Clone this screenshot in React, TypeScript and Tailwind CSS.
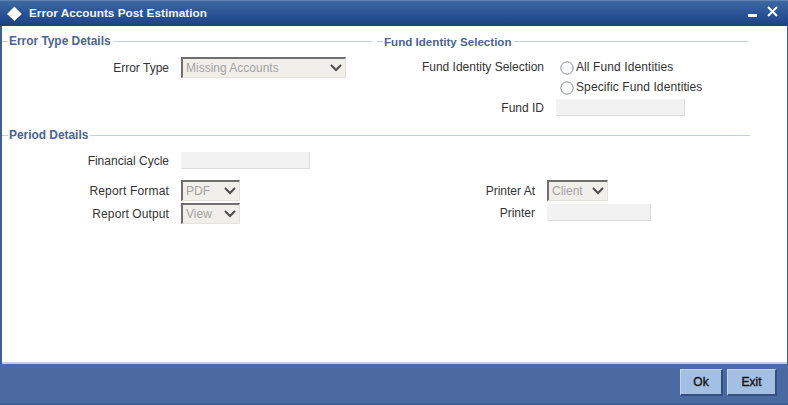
import { ReactNode } from 'react'

function SectionHead({ title, className, titleClass = 'text-[11.9px]' }: { title: string; className: string; titleClass?: string }) {
  return (
    <div className={`flex items-center h-4 ${className}`}>
      <div className="w-[6px] h-px bg-[#c5d0de]" />
      <span className={`px-px pt-[2px] font-bold text-[#4a6592] whitespace-nowrap ${titleClass}`}>{title}</span>
      <div className="flex-1 ml-px h-px bg-[#c5d0de]" />
    </div>
  )
}

function Label({ width, children, spacing = '' }: { width: string; children: ReactNode; spacing?: string }) {
  return (
    <span className={`${width} shrink-0 text-right text-xs text-[#333333] whitespace-nowrap ${spacing}`}>
      {children}
    </span>
  )
}

function Select({ value, width }: { value: string; width: string }) {
  return (
    <div className={`${width} h-[21px] shrink-0 flex items-center justify-between bg-[#f1efe9] border-t-2 border-l-2 border-t-[#6f6f6f] border-l-[#6f6f6f] border-r border-b border-r-[#e4e2dc] border-b-[#e4e2dc] pl-[3px] pr-[3px]`}>
      <span className="text-xs text-[#a3a3a3] whitespace-nowrap">{value}</span>
      <svg width="12" height="8" viewBox="0 0 12 8" fill="none">
        <path d="M1 1l5 5 5-5" stroke="#4d4d4d" strokeWidth="2" />
      </svg>
    </div>
  )
}

function Input({ width }: { width: string }) {
  return <div className={`${width} h-[17px] shrink-0 bg-[#f2f2f2] border-b border-r border-[#dcdcdc]`} />
}

function Radio({ label }: { label: string }) {
  return (
    <div className="flex items-center h-5">
      <svg width="14" height="14" viewBox="0 0 14 14" className="shrink-0 mt-px">
        <circle cx="7" cy="7" r="6.2" fill="#f8f8f8" stroke="#8a8f96" />
      </svg>
      <span className="ml-[2px] text-xs tracking-[0.1px] text-[#333333] whitespace-nowrap">{label}</span>
    </div>
  )
}

function Button({ width, children }: { width: string; children: ReactNode }) {
  return (
    <button className={`${width} h-[27px] bg-[#a3bfe3] border-t border-l border-t-[#c4d6ee] border-l-[#c4d6ee] border-r-2 border-b-2 border-r-[#33507f] border-b-[#33507f] text-xs text-[#111111] [-webkit-text-stroke:0.35px_#111111]`}>
      {children}
    </button>
  )
}

export default function App() {
  return (
    <div className="w-[788px] h-[405px] flex flex-col bg-[#3a5f9b] font-['Liberation_Sans',Arial,sans-serif] overflow-hidden">
      <div className="h-[26px] shrink-0 flex items-center pl-[6px] pr-[9px] bg-gradient-to-b from-[#3d689f] via-[#2a5496] to-[#1d4283] border-t border-[#5f83b4]">
        <svg width="18" height="18" viewBox="0 0 18 18" className="shrink-0">
          <path d="M9 1.500L17 9l-7.500 7.500z" fill="#0f2c5c" />
          <path d="M8.500 1.500L16 9l-7.500 7L1 9z" fill="#ffffff" />
        </svg>
        <span className="ml-[5px] text-[11.8px] font-bold text-[#f2f5fa] whitespace-nowrap">Error Accounts Post Estimation</span>
        <div className="ml-auto flex items-center gap-[9px]">
          <div className="w-[9px] h-[3px] bg-white mt-[4px]" />
          <svg width="13" height="13" viewBox="0 0 13 13" className="mb-[5px]">
            <path d="M2 2l9 9M11 2l-9 9" stroke="#ffffff" strokeWidth="2" />
          </svg>
        </div>
      </div>

      <div className="flex-1 ml-[2px] mr-px bg-white flex flex-col pt-[7px] border-b-2 border-[#c3cfdf]">
        <div className="flex">
          <div className="w-[375px] shrink-0">
            <SectionHead title="Error Type Details" className="w-[370px]" />
            <div className="flex items-center mt-[8px]">
              <Label width="w-[167px]">Error Type</Label>
              <div className="ml-[12px]">
                <Select value="Missing Accounts" width="w-[165px]" />
              </div>
            </div>
          </div>
          <div className="flex-1">
            <SectionHead title="Fund Identity Selection" className="w-[371px]" titleClass="text-[11.6px]" />
            <div className="flex mt-[8px]">
              <div className="w-[167px] shrink-0 h-5 flex items-center justify-end">
                <Label width="w-auto">Fund Identity Selection</Label>
              </div>
              <div className="ml-[16px]">
                <Radio label="All Fund Identities" />
                <Radio label="Specific Fund Identities" />
              </div>
            </div>
            <div className="flex items-center mt-[2px]">
              <Label width="w-[167px]">Fund ID</Label>
              <div className="ml-[12px]">
                <Input width="w-[129px]" />
              </div>
            </div>
          </div>
        </div>

        <SectionHead title="Period Details" className="w-[748px] mt-[11px]" />
        <div className="flex items-center mt-[9px]">
          <Label width="w-[167px]">Financial Cycle</Label>
          <div className="ml-[12px]">
            <Input width="w-[129px]" />
          </div>
        </div>

        <div className="flex mt-[11px]">
          <div className="w-[376px] shrink-0 flex flex-col gap-[2px]">
            <div className="flex items-center">
              <Label width="w-[167px]" spacing="tracking-[0.17px]">Report Format</Label>
              <div className="ml-[12px]">
                <Select value="PDF" width="w-[59px]" />
              </div>
            </div>
            <div className="flex items-center">
              <Label width="w-[167px]" spacing="tracking-[0.1px]">Report Output</Label>
              <div className="ml-[12px]">
                <Select value="View" width="w-[59px]" />
              </div>
            </div>
          </div>
          <div className="flex flex-col gap-[3px]">
            <div className="flex items-center">
              <Label width="w-[157px]">Printer At</Label>
              <div className="ml-[12px]">
                <Select value="Client" width="w-[61px]" />
              </div>
            </div>
            <div className="flex items-center">
              <Label width="w-[157px]">Printer</Label>
              <div className="ml-[12px]">
                <Input width="w-[104px]" />
              </div>
            </div>
          </div>
        </div>
      </div>

      <div className="h-[41px] shrink-0 flex items-center justify-end gap-[4px] pr-[11px] pb-[2px] bg-[#4a6aa1] border-b-2 border-[#3a5f9b]">
        <Button width="w-[43px]">Ok</Button>
        <Button width="w-[50px]">Exit</Button>
      </div>
    </div>
  )
}
